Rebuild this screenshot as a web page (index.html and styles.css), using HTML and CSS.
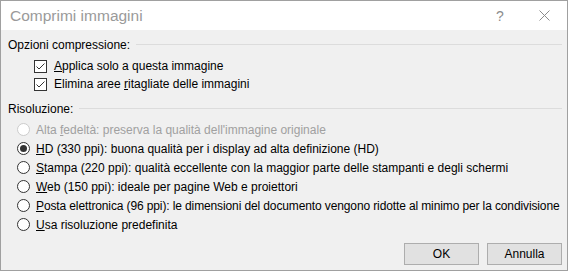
FILE: index.html
```html
<!DOCTYPE html>
<html lang="it">
<head>
    <meta charset="UTF-8">
    <title>Comprimi immagini</title>
<link rel="stylesheet" href="styles.css">
</head>
<body>

    <div class="dialog">
        <div class="titleBar">
            <span class="titleText">Comprimi immagini</span>
            <span class="titleBtn helpBtn">?</span>
            <span class="titleBtn closeBtn">
                <svg width="11" height="11" viewBox="0 0 11 11"><path d="M0.5 0.5 L10.5 10.5 M10.5 0.5 L0.5 10.5" stroke="#8c8c8c" stroke-width="1" fill="none"/></svg>
            </span>
        </div>

        <div class="body">
            <div class="groupHead">
                <span>Opzioni compressione:</span>
                <span class="groupLine"></span>
            </div>
            <div class="checkList">
                <div class="checkRow">
                    <span class="checkBox">
                        <svg width="11" height="11" viewBox="0 0 11 11"><path d="M1.5 5.5 L4 8 L9.5 2.5" stroke="#333" stroke-width="1" fill="none"/></svg>
                    </span>
                    <span><u>A</u>pplica solo a questa immagine</span>
                </div>
                <div class="checkRow">
                    <span class="checkBox">
                        <svg width="11" height="11" viewBox="0 0 11 11"><path d="M1.5 5.5 L4 8 L9.5 2.5" stroke="#333" stroke-width="1" fill="none"/></svg>
                    </span>
                    <span>Elimina aree <u>r</u>itagliate delle immagini</span>
                </div>
            </div>

            <div class="groupHead second">
                <span>Risoluzione:</span>
                <span class="groupLine"></span>
            </div>
            <div class="radioList">
                <div class="radioRow disabled">
                    <span class="radio"></span>
                    <span>Alta <u>f</u>edeltà: preserva la qualità dell'immagine originale</span>
                </div>
                <div class="radioRow">
                    <span class="radio checked"></span>
                    <span><u>H</u>D (330 ppi): buona qualità per i display ad alta definizione (HD)</span>
                </div>
                <div class="radioRow">
                    <span class="radio"></span>
                    <span><u>S</u>tampa (220 ppi): qualità eccellente con la maggior parte delle stampanti e degli schermi</span>
                </div>
                <div class="radioRow">
                    <span class="radio"></span>
                    <span><u>W</u>eb (150 ppi): ideale per pagine Web e proiettori</span>
                </div>
                <div class="radioRow longRow">
                    <span class="radio"></span>
                    <span><u>P</u>osta elettronica (96 ppi): le dimensioni del documento vengono ridotte al minimo per la condivisione</span>
                </div>
                <div class="radioRow">
                    <span class="radio"></span>
                    <span><u>U</u>sa risoluzione predefinita</span>
                </div>
            </div>

            <div class="buttonRow">
                <div class="btn">OK</div>
                <div class="btn">Annulla</div>
            </div>
        </div>
    </div>

</body>
</html>
```

FILE: styles.css
```css
body{
    margin: 0;
    font-family: "Liberation Sans", Arial, sans-serif;
    font-size: 12px;
    color: #000;
}
.dialog{
    width: 568px;
    height: 271px;
    box-sizing: border-box;
    border: 1px solid #a0a0a0;
    display: flex;
    flex-direction: column;
    background: #f0f0f0;
}
.titleBar{
    height: 29px;
    background: #fff;
    display: flex;
    align-items: center;
    padding-left: 9px;
}
.titleText{
    flex: 1;
    font-size: 15.5px;
    color: #9a9a9a;
}
.titleBtn{
    color: #8c8c8c;
    display: flex;
    align-items: center;
    justify-content: center;
}
.helpBtn{
    width: 14px;
    font-size: 14px;
    margin-right: 32px;
}
.closeBtn{
    width: 11px;
    margin-right: 17px;
}
.body{
    flex: 1;
    display: flex;
    flex-direction: column;
    padding: 7px 5px 5px 7px;
}
.groupHead{
    height: 16px;
    display: flex;
    align-items: center;
}
.groupHead.second{
    margin-top: 8px;
}
.groupLine{
    flex: 1;
    height: 1px;
    background: #dcdcdc;
    margin-left: 6px;
    margin-top: -1px;
}
.checkList{
    margin-top: 4px;
}
.checkRow{
    height: 18px;
    display: flex;
    align-items: center;
    padding-left: 26px;
    white-space: nowrap;
}
.checkBox{
    width: 11px;
    height: 11px;
    border: 1px solid #333;
    background: #fff;
    margin-right: 7px;
    display: flex;
}
.radioList{
    margin-top: 3px;
}
.radioRow{
    height: 19px;
    display: flex;
    align-items: center;
    padding-left: 9px;
    white-space: nowrap;
}
.radioRow.longRow{
    letter-spacing: -0.12px;
}
.radio{
    flex-shrink: 0;
    width: 11px;
    height: 11px;
    border: 1px solid #333;
    border-radius: 50%;
    background: #fff;
    margin-right: 6px;
    display: flex;
    align-items: center;
    justify-content: center;
}
.radio.checked::after{
    content: "";
    width: 7px;
    height: 7px;
    border-radius: 50%;
    background: #333;
}
.disabled{
    color: #a0a0a0;
}
.disabled .radio{
    border-color: #cccccc;
}
u{
    text-underline-offset: 1px;
}
.buttonRow{
    margin-top: auto;
    display: flex;
    justify-content: flex-end;
    gap: 8px;
}
.btn{
    width: 73px;
    height: 20px;
    border: 1px solid #adadad;
    background: #e1e1e1;
    display: flex;
    align-items: center;
    justify-content: center;
}
```
